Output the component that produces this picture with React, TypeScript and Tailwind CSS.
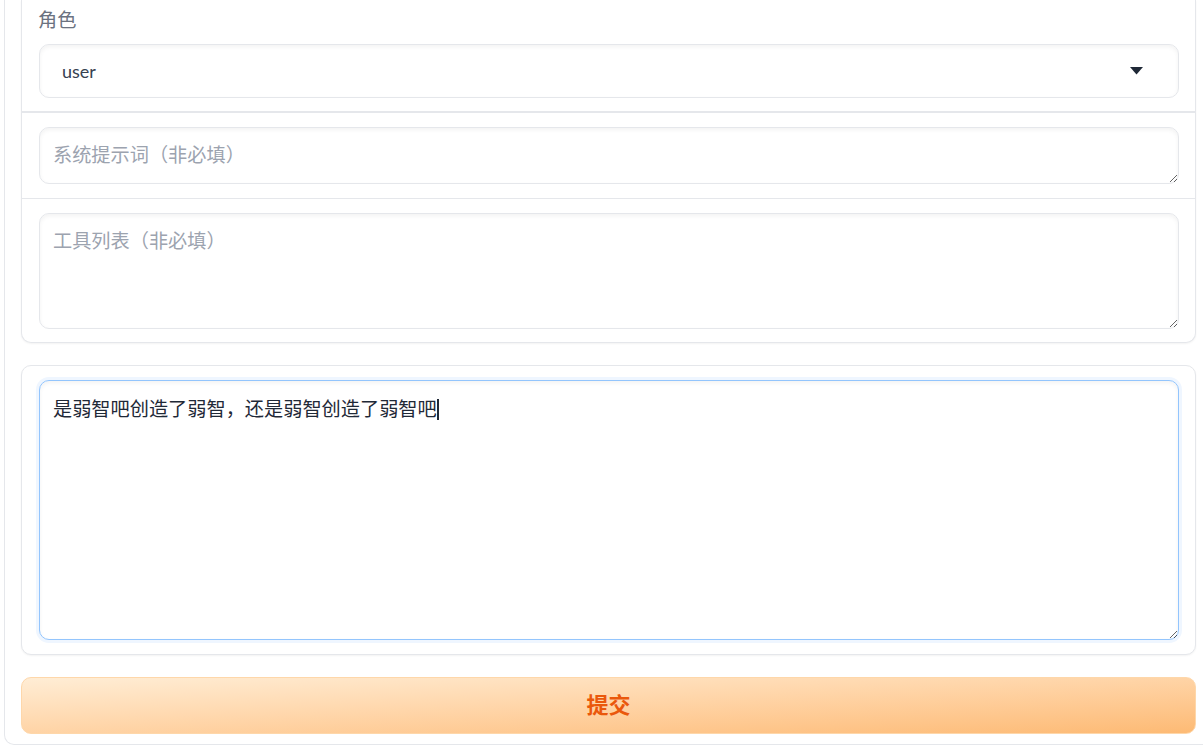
import React from "react";

const FONT = { fontFamily: '"Lato", "Noto Sans CJK SC", "Noto Sans", sans-serif' };
const TEXT = "是弱智吧创造了弱智，还是弱智创造了弱智吧";

export default function App() {
  return (
    <div className="w-[1203px] h-[745px] overflow-hidden bg-white" style={FONT}>
      <div className="ml-[4px] w-[1209px] h-[745px] border-x border-b border-[#e5e7eb] rounded-b-[10px] px-[16px] pb-[10px] flex flex-col">
        {/* block 1 */}
        <div className="border-x border-b border-[#e5e7eb] rounded-b-[10px] shadow-[0_1px_2px_rgba(0,0,0,0.05)] flex flex-col bg-white">
          <div className="pl-[17px] pr-[16px] pt-[6px] pb-[13px] flex flex-col">
            <div className="text-[19.2px] leading-[27px] text-[#6b7280] -ml-[1px]">角色</div>
            <div className="mt-[11px] h-[54px] border border-[#e5e7eb] rounded-[10px] shadow-[inset_0_2px_4px_rgba(0,0,0,0.05)] flex items-center justify-between pl-[22px] pr-[35px]">
              <span className="text-[18px] text-[#374151]">user</span>
              <svg width="13" height="8" viewBox="0 0 13 8">
                <path d="M0 0 L13 0 L6.5 7.5 Z" fill="#1f2937" />
              </svg>
            </div>
          </div>
          <div className="h-[2px] bg-[#e5e7eb]" />
          <div className="pl-[17px] pr-[16px] py-[14px] flex">
            <textarea
              placeholder="系统提示词（非必填）"
              className="w-full h-[57px] border border-[#e5e7eb] rounded-[10px] shadow-[inset_0_2px_4px_rgba(0,0,0,0.05)] px-[13px] py-[13px] text-[19.2px] leading-[27px] text-[#374151] placeholder:text-[#9ca3af] outline-none resize-y bg-white"
              style={FONT}
            />
          </div>
          <div className="h-[1px] bg-[#e5e7eb]" />
          <div className="pl-[17px] pr-[16px] pt-[14px] pb-[13px] flex">
            <textarea
              placeholder="工具列表（非必填）"
              className="w-full h-[116px] border border-[#e5e7eb] rounded-[10px] shadow-[inset_0_2px_4px_rgba(0,0,0,0.05)] px-[13px] py-[13px] text-[19.2px] leading-[27px] text-[#374151] placeholder:text-[#9ca3af] outline-none resize-y bg-white"
              style={FONT}
            />
          </div>
        </div>

        {/* block 2 */}
        <div className="mt-[22px] border border-[#e5e7eb] rounded-[10px] shadow-[0_1px_2px_rgba(0,0,0,0.05)] pl-[17px] pr-[16px] py-[14px] flex bg-white">
          <div className="relative w-full h-[260px]">
            <textarea
              defaultValue={TEXT}
              className="w-full h-[260px] border border-[#93c5fd] rounded-[10px] shadow-[0_0_0_3px_#eff6ff,inset_0_2px_4px_rgba(0,0,0,0.05)] px-[13px] py-[14px] text-[19.2px] leading-[27px] text-[#1f2937] outline-none resize-y bg-white"
              style={FONT}
            />
            <div className="absolute inset-0 pointer-events-none border border-transparent px-[13px] py-[14px] text-[19.2px] leading-[27px] text-transparent">
              {TEXT}
              <span className="inline-block align-middle w-[2px] h-[21px] bg-[#1f2937] -mt-[3px]" />
            </div>
          </div>
        </div>

        {/* button */}
        <button className="mt-[22px] h-[57px] w-full rounded-[10px] border border-[#fed7aa] bg-gradient-to-br from-[#ffedd5] to-[#fdba74] text-[#ea580c] text-[22px] font-bold leading-none pb-[1px]">
          提交
        </button>
      </div>
    </div>
  );
}
